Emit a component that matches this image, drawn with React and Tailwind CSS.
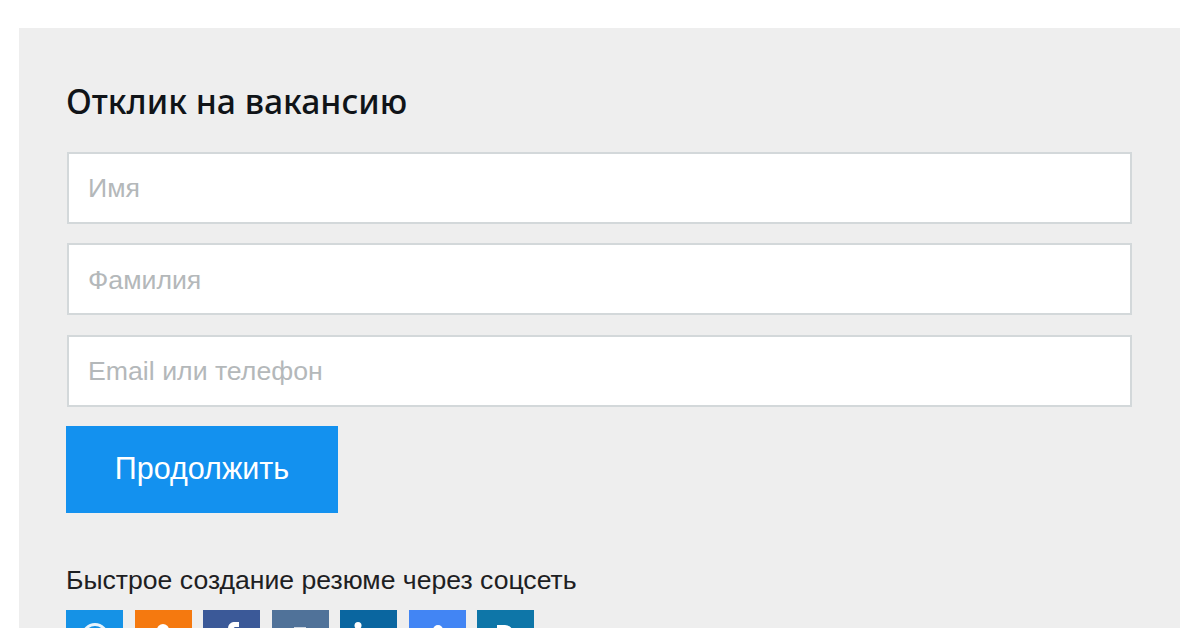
const icons = [
  { bg: "bg-[#1592e6]", g: <circle cx="29" cy="26.500" r="12" fill="none" stroke="#fff" strokeWidth="3" opacity="0.9" /> },
  { bg: "bg-[#f5790f]", g: <circle cx="28" cy="20" r="6" fill="#fff" /> },
  { bg: "bg-[#3b5998]", g: <path d="M25 40V27h-4v-5h4v-3c0-5 3-7 7-7h4v5h-3c-2 0-2.500 1-2.500 2.500V22H36l-1 5h-4.500v13z" fill="#fff" /> },
  { bg: "bg-[#507299]", g: <rect x="22" y="17" width="12" height="10" fill="#fff" opacity="0.7" /> },
  { bg: "bg-[#0a66a0]", g: <circle cx="18" cy="15.500" r="3.500" fill="#fff" /> },
  { bg: "bg-[#4285f4]", g: <circle cx="29" cy="20" r="5" fill="#fff" /> },
  { bg: "bg-[#0e76a8]", g: <path d="M20 15h8a8 8 0 0 1 8 8v5h-5v-5a3 3 0 0 0-3-3h-3v8h-5z" fill="#fff" /> },
];

function Field({ label }) {
  return (
    <div className="mx-px flex h-[72px] items-center border-2 border-[#d3d8da] bg-white px-[19px] pt-px text-[26.700px] text-[#b4b8ba]">
      {label}
    </div>
  );
}

export default function App() {
  return (
    <div className="h-[628px] overflow-hidden bg-white px-[19px] pt-[28px] font-['Liberation_Sans',sans-serif]">
      <div className="h-[640px] w-[1161px] bg-[#eeeeee] pl-[47px] pr-[47px] pt-[48px]">
        <h1 className="mb-[25.750px] h-[50px] font-['Noto_Sans',sans-serif] text-[33.700px] font-medium leading-[50px] text-[#101418]">
          Отклик на вакансию
        </h1>
        <div className="flex flex-col gap-[19.500px]">
          <Field label="Имя" />
          <Field label="Фамилия" />
          <Field label="Email или телефон" />
        </div>
        <button className="mt-[19.250px] h-[87px] w-[272px] bg-[#1391ef] pb-[2px] text-[30.500px] text-white">Продолжить</button>
        <p className="mt-[49px] text-[26.600px] leading-[36px] text-[#1d2022]">Быстрое создание резюме через соцсеть</p>
        <div className="mt-[12px] flex gap-[11.500px]">
          {icons.map((icon, i) => (
            <div key={i} className={`h-[57px] w-[57px] ${icon.bg}`}>
              <svg viewBox="0 0 57 57" className="h-full w-full">{icon.g}</svg>
            </div>
          ))}
        </div>
      </div>
    </div>
  );
}
